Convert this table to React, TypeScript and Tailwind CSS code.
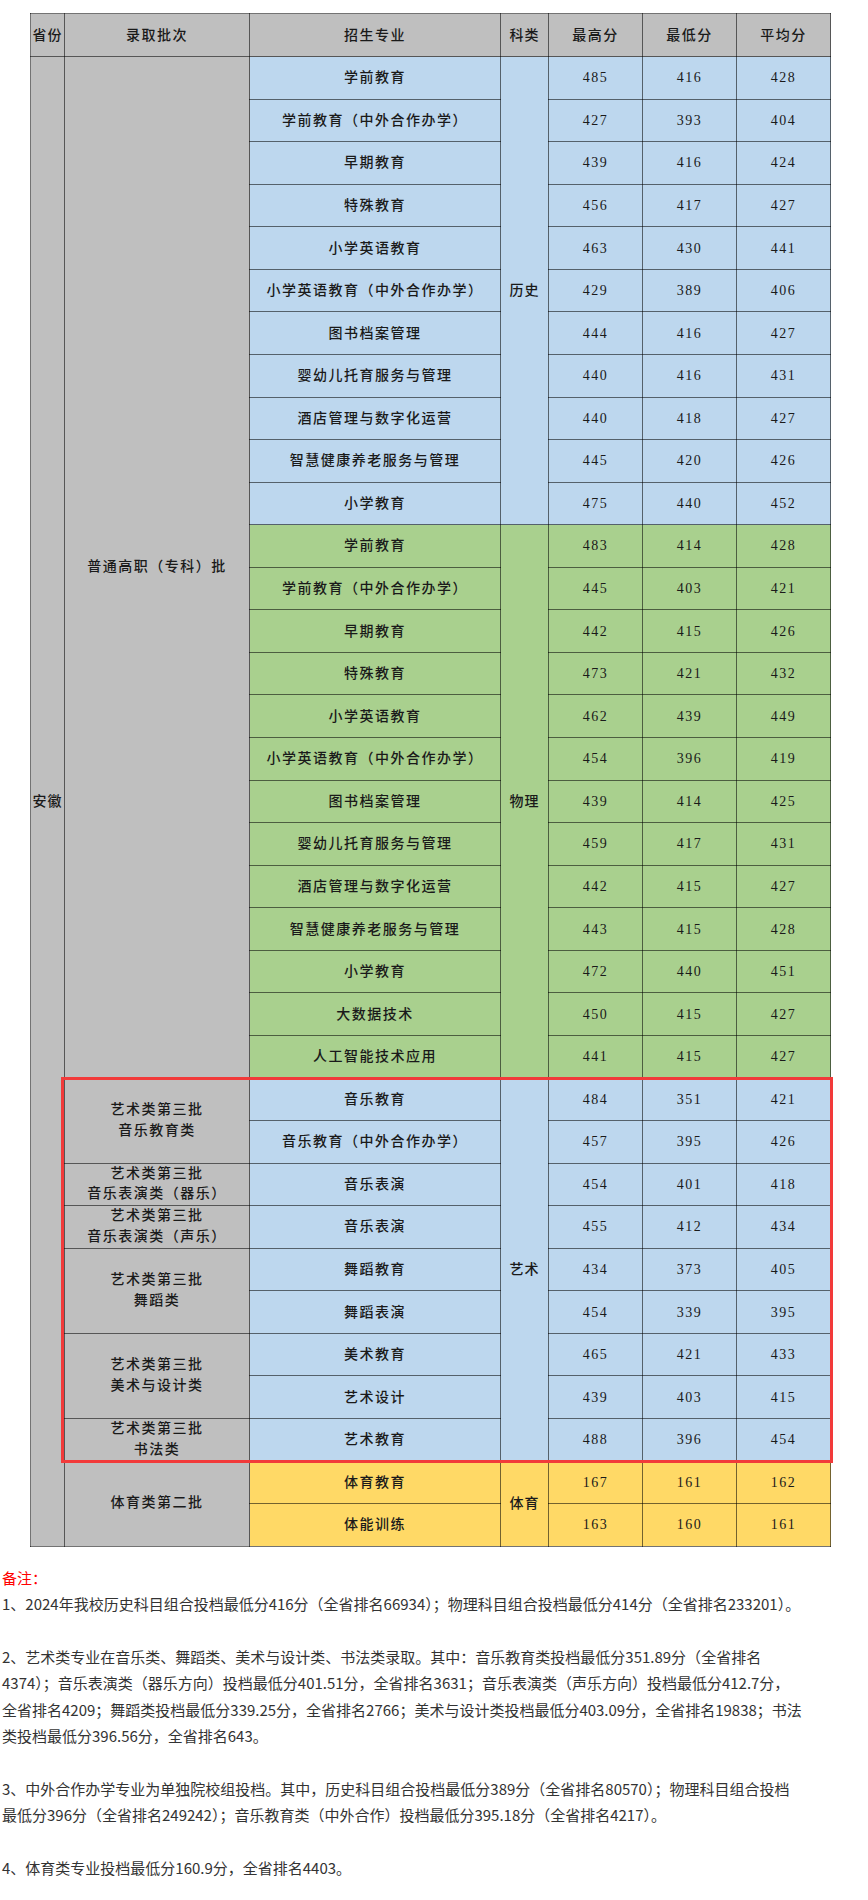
import React from 'react';

type Row = {
    name: string;
    max: number;
    min: number;
    avg: number;
    bg: string;
    batch?: { text: string[]; span: number };
    subject?: { text: string; span: number };
};

const BLUE = 'bg-[#bdd7ee]';
const GREEN = 'bg-[#a9d08e]';
const YELLOW = 'bg-[#ffd966]';

const history: [string, number, number, number][] = [
    ['学前教育', 485, 416, 428],
    ['学前教育（中外合作办学）', 427, 393, 404],
    ['早期教育', 439, 416, 424],
    ['特殊教育', 456, 417, 427],
    ['小学英语教育', 463, 430, 441],
    ['小学英语教育（中外合作办学）', 429, 389, 406],
    ['图书档案管理', 444, 416, 427],
    ['婴幼儿托育服务与管理', 440, 416, 431],
    ['酒店管理与数字化运营', 440, 418, 427],
    ['智慧健康养老服务与管理', 445, 420, 426],
    ['小学教育', 475, 440, 452],
];

const physics: [string, number, number, number][] = [
    ['学前教育', 483, 414, 428],
    ['学前教育（中外合作办学）', 445, 403, 421],
    ['早期教育', 442, 415, 426],
    ['特殊教育', 473, 421, 432],
    ['小学英语教育', 462, 439, 449],
    ['小学英语教育（中外合作办学）', 454, 396, 419],
    ['图书档案管理', 439, 414, 425],
    ['婴幼儿托育服务与管理', 459, 417, 431],
    ['酒店管理与数字化运营', 442, 415, 427],
    ['智慧健康养老服务与管理', 443, 415, 428],
    ['小学教育', 472, 440, 451],
    ['大数据技术', 450, 415, 427],
    ['人工智能技术应用', 441, 415, 427],
];

const art: [string, number, number, number][] = [
    ['音乐教育', 484, 351, 421],
    ['音乐教育（中外合作办学）', 457, 395, 426],
    ['音乐表演', 454, 401, 418],
    ['音乐表演', 455, 412, 434],
    ['舞蹈教育', 434, 373, 405],
    ['舞蹈表演', 454, 339, 395],
    ['美术教育', 465, 421, 433],
    ['艺术设计', 439, 403, 415],
    ['艺术教育', 488, 396, 454],
];

const sports: [string, number, number, number][] = [
    ['体育教育', 167, 161, 162],
    ['体能训练', 163, 160, 161],
];

const rows: Row[] = [
    ...history.map(([name, max, min, avg]) => ({ name, max, min, avg, bg: BLUE })),
    ...physics.map(([name, max, min, avg]) => ({ name, max, min, avg, bg: GREEN })),
    ...art.map(([name, max, min, avg]) => ({ name, max, min, avg, bg: BLUE })),
    ...sports.map(([name, max, min, avg]) => ({ name, max, min, avg, bg: YELLOW })),
];

// merged cells
rows[0].batch = { text: ['普通高职（专科）批'], span: 24 };
rows[24].batch = { text: ['艺术类第三批', '音乐教育类'], span: 2 };
rows[26].batch = { text: ['艺术类第三批', '音乐表演类（器乐）'], span: 1 };
rows[27].batch = { text: ['艺术类第三批', '音乐表演类（声乐）'], span: 1 };
rows[28].batch = { text: ['艺术类第三批', '舞蹈类'], span: 2 };
rows[30].batch = { text: ['艺术类第三批', '美术与设计类'], span: 2 };
rows[32].batch = { text: ['艺术类第三批', '书法类'], span: 1 };
rows[33].batch = { text: ['体育类第二批'], span: 2 };

rows[0].subject = { text: '历史', span: 11 };
rows[11].subject = { text: '物理', span: 13 };
rows[24].subject = { text: '艺术', span: 9 };
rows[33].subject = { text: '体育', span: 2 };

const cell = 'border border-black/55 text-center align-middle p-0';

export default function App() {
    return (
        <div className="w-[868px] min-h-[1900px] bg-white pt-[13px]">
            {/* Score table */}
            <div
                className="relative ml-[30px] w-[800px] text-[14px] tracking-[1.5px] text-[#1a1a1a] font-medium"
                style={{ fontFamily: '"Liberation Serif", "Noto Sans CJK SC", serif' }}
            >
                <table className="w-[800px] table-fixed border-collapse">
                    <colgroup>
                        <col className="w-[34px]" />
                        <col className="w-[185px]" />
                        <col className="w-[251px]" />
                        <col className="w-[48px]" />
                        <col className="w-[94px]" />
                        <col className="w-[94px]" />
                        <col className="w-[94px]" />
                    </colgroup>
                    <thead>
                        <tr className="h-[43px] bg-[#bfbfbf]">
                            <th className={`${cell} font-medium tracking-[1px]`}>省份</th>
                            <th className={`${cell} font-medium`}>录取批次</th>
                            <th className={`${cell} font-medium`}>招生专业</th>
                            <th className={`${cell} font-medium tracking-[1px]`}>科类</th>
                            <th className={`${cell} font-medium`}>最高分</th>
                            <th className={`${cell} font-medium`}>最低分</th>
                            <th className={`${cell} font-medium`}>平均分</th>
                        </tr>
                    </thead>
                    <tbody>
                        {rows.map((r, i) => (
                            <tr key={i} className="h-[42.57px]">
                                {i === 0 && (
                                    <td rowSpan={35} className={`${cell} bg-[#bfbfbf] tracking-[1px]`}>
                                        安徽
                                    </td>
                                )}
                                {r.batch && (
                                    <td rowSpan={r.batch.span} className={`${cell} bg-[#bfbfbf] leading-[20.5px]`}>
                                        {r.batch.text.map((t, j) => (
                                            <div key={j}>{t}</div>
                                        ))}
                                    </td>
                                )}
                                <td className={`${cell} ${r.bg}`}>{r.name}</td>
                                {r.subject && (
                                    <td rowSpan={r.subject.span} className={`${cell} ${r.bg} tracking-[1px]`}>
                                        {r.subject.text}
                                    </td>
                                )}
                                <td className={`${cell} ${r.bg}`}>{r.max}</td>
                                <td className={`${cell} ${r.bg}`}>{r.min}</td>
                                <td className={`${cell} ${r.bg}`}>{r.avg}</td>
                            </tr>
                        ))}
                    </tbody>
                </table>

                {/* highlight around art batch */}
                <div className="pointer-events-none absolute left-[31px] top-[1064px] h-[386px] w-[772px] border-[3px] border-[#f23a3a]" />
            </div>

            {/* Notes */}
            <div
                className="mt-[18px] pl-[2px] text-[15px] leading-[26.4px] text-[#333]"
                style={{ fontFamily: '"Noto Sans CJK SC", sans-serif' }}
            >
                <p className="text-[#ff0000]">备注：</p>
                <p className="mb-[26.4px] whitespace-nowrap">
                    1、2024年我校历史科目组合投档最低分416分（全省排名66934）；物理科目组合投档最低分414分（全省排名233201）。
                </p>
                <p className="mb-[26.4px] whitespace-nowrap">
                    2、艺术类专业在音乐类、舞蹈类、美术与设计类、书法类录取。其中：音乐教育类投档最低分351.89分（全省排名
                    <br />
                    4374）；音乐表演类（器乐方向）投档最低分401.51分，全省排名3631；音乐表演类（声乐方向）投档最低分412.7分，
                    <br />
                    全省排名4209；舞蹈类投档最低分339.25分，全省排名2766；美术与设计类投档最低分403.09分，全省排名19838；书法
                    <br />
                    类投档最低分396.56分，全省排名643。
                </p>
                <p className="mb-[26.4px] whitespace-nowrap">
                    3、中外合作办学专业为单独院校组投档。其中，历史科目组合投档最低分389分（全省排名80570）；物理科目组合投档
                    <br />
                    最低分396分（全省排名249242）；音乐教育类（中外合作）投档最低分395.18分（全省排名4217）。
                </p>
                <p className="whitespace-nowrap">4、体育类专业投档最低分160.9分，全省排名4403。</p>
            </div>
        </div>
    );
}
